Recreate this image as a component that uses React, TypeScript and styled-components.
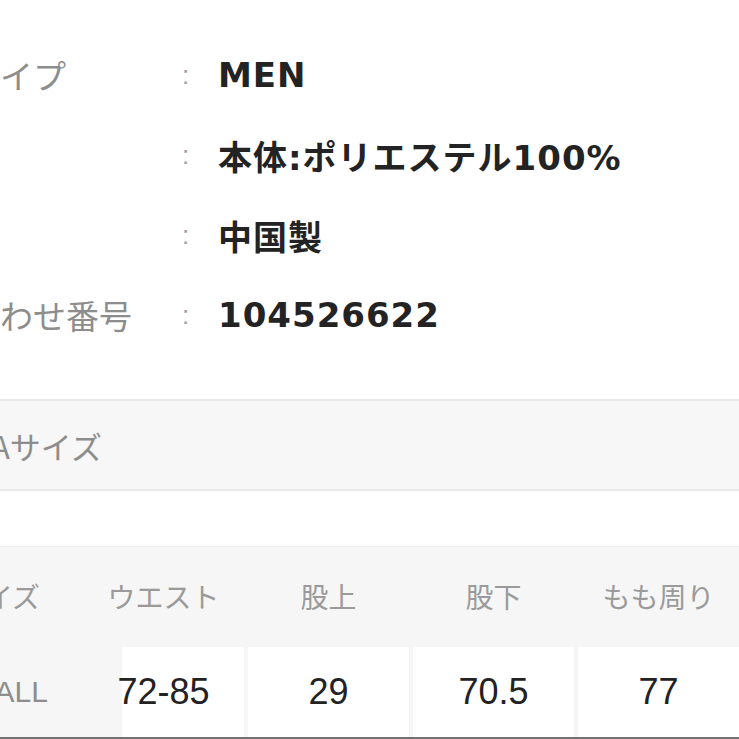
import React from 'react';
import styled, { createGlobalStyle } from 'styled-components';

const GlobalStyle = createGlobalStyle`
  html, body {
    margin: 0;
    padding: 0;
    background: #fff;
    overflow: hidden;
  }
  body {
    font-family: "Noto Sans CJK JP", sans-serif;
  }
`;

// the screenshot is scrolled a little to the right, so the page starts off-screen
const Page = styled.div`
  width: 939px;
  margin-left: -99px;
  padding-top: 35px;
`;

const SpecRow = styled.div`
  display: grid;
  grid-template-columns: 270px 47px auto;
  align-items: center;
  height: 80px;
`;

const Label = styled.div`
  font-size: 33px;
  color: #8d8d8d;
  white-space: nowrap;
`;

const Colon = styled.div`
  font-family: "Liberation Sans", sans-serif;
  font-size: 26px;
  color: #a0a0a0;
  padding-left: 11px;
`;

const Value = styled.div`
  font-family: "DejaVu Sans", "Noto Sans CJK JP", sans-serif;
  font-weight: 700;
  font-size: 34px;
  letter-spacing: 1px;
  color: #232323;
  white-space: nowrap;
`;

const SizeBand = styled.div`
  margin-top: 44px;
  height: 88px;
  display: flex;
  align-items: center;
  padding-left: 90px;
  background: #f7f7f7;
  border-top: 2px solid #e8e8e8;
  border-bottom: 2px solid #e8e8e8;
  font-size: 31px;
  color: #8d8d8d;
`;

const Table = styled.div`
  margin-top: 55px;
  margin-left: 17px;
  width: 821px;
`;

const HeadRow = styled.div`
  display: grid;
  grid-template-columns: repeat(5, 161px);
  column-gap: 4px;
  height: 98px;
  border-top: 1px solid #eeeeee;
  background: #f6f6f6;
`;

const HeadCell = styled.div`
  display: flex;
  align-items: center;
  justify-content: center;
  font-size: 28px;
  color: #9a9a9a;
  white-space: nowrap;
`;

const DataRow = styled.div`
  display: grid;
  grid-template-columns: repeat(5, 161px);
  column-gap: 4px;
  height: 90px;
  padding-top: 2px;
  background: #f6f6f6;
  border-bottom: 2px solid #727272;
`;

const DataCell = styled.div<{ $covered?: number }>`
  display: flex;
  align-items: center;
  justify-content: center;
  font-family: "Liberation Sans", sans-serif;
  font-size: 36px;
  color: #222;
  background: ${(p) =>
    p.$covered
      ? `linear-gradient(90deg, #f6f6f6 ${p.$covered}px, #fff ${p.$covered}px)`
      : '#fff'};
`;

const SizeCell = styled.div`
  display: flex;
  align-items: center;
  justify-content: flex-end;
  padding-right: 31px;
  font-family: "Liberation Sans", sans-serif;
  font-size: 30px;
  color: #8d8d8d;
`;

const specs = [
  { label: '性別タイプ', value: 'MEN' },
  { label: '素材', value: '本体:ポリエステル100%' },
  { label: '原産国', value: '中国製' },
  { label: '問い合わせ番号', value: '104526622' },
];

const columns = ['ウエスト', '股上', '股下', 'もも周り'];
const values = ['72-85', '29', '70.5', '77'];

export default function App() {
  return (
    <>
      <GlobalStyle />
      <Page>
        {specs.map((s) => (
          <SpecRow key={s.label}>
            <Label>{s.label}</Label>
            <Colon>:</Colon>
            <Value>{s.value}</Value>
          </SpecRow>
        ))}

        <SizeBand>Aサイズ</SizeBand>

        <Table>
          <HeadRow>
            <HeadCell>サイズ</HeadCell>
            {columns.map((c) => (
              <HeadCell key={c}>{c}</HeadCell>
            ))}
          </HeadRow>
          <DataRow>
            <SizeCell>ALL</SizeCell>
            {values.map((v, i) => (
              <DataCell key={v} $covered={i === 0 ? 39 : undefined}>
                {v}
              </DataCell>
            ))}
          </DataRow>
        </Table>
      </Page>
    </>
  );
}
